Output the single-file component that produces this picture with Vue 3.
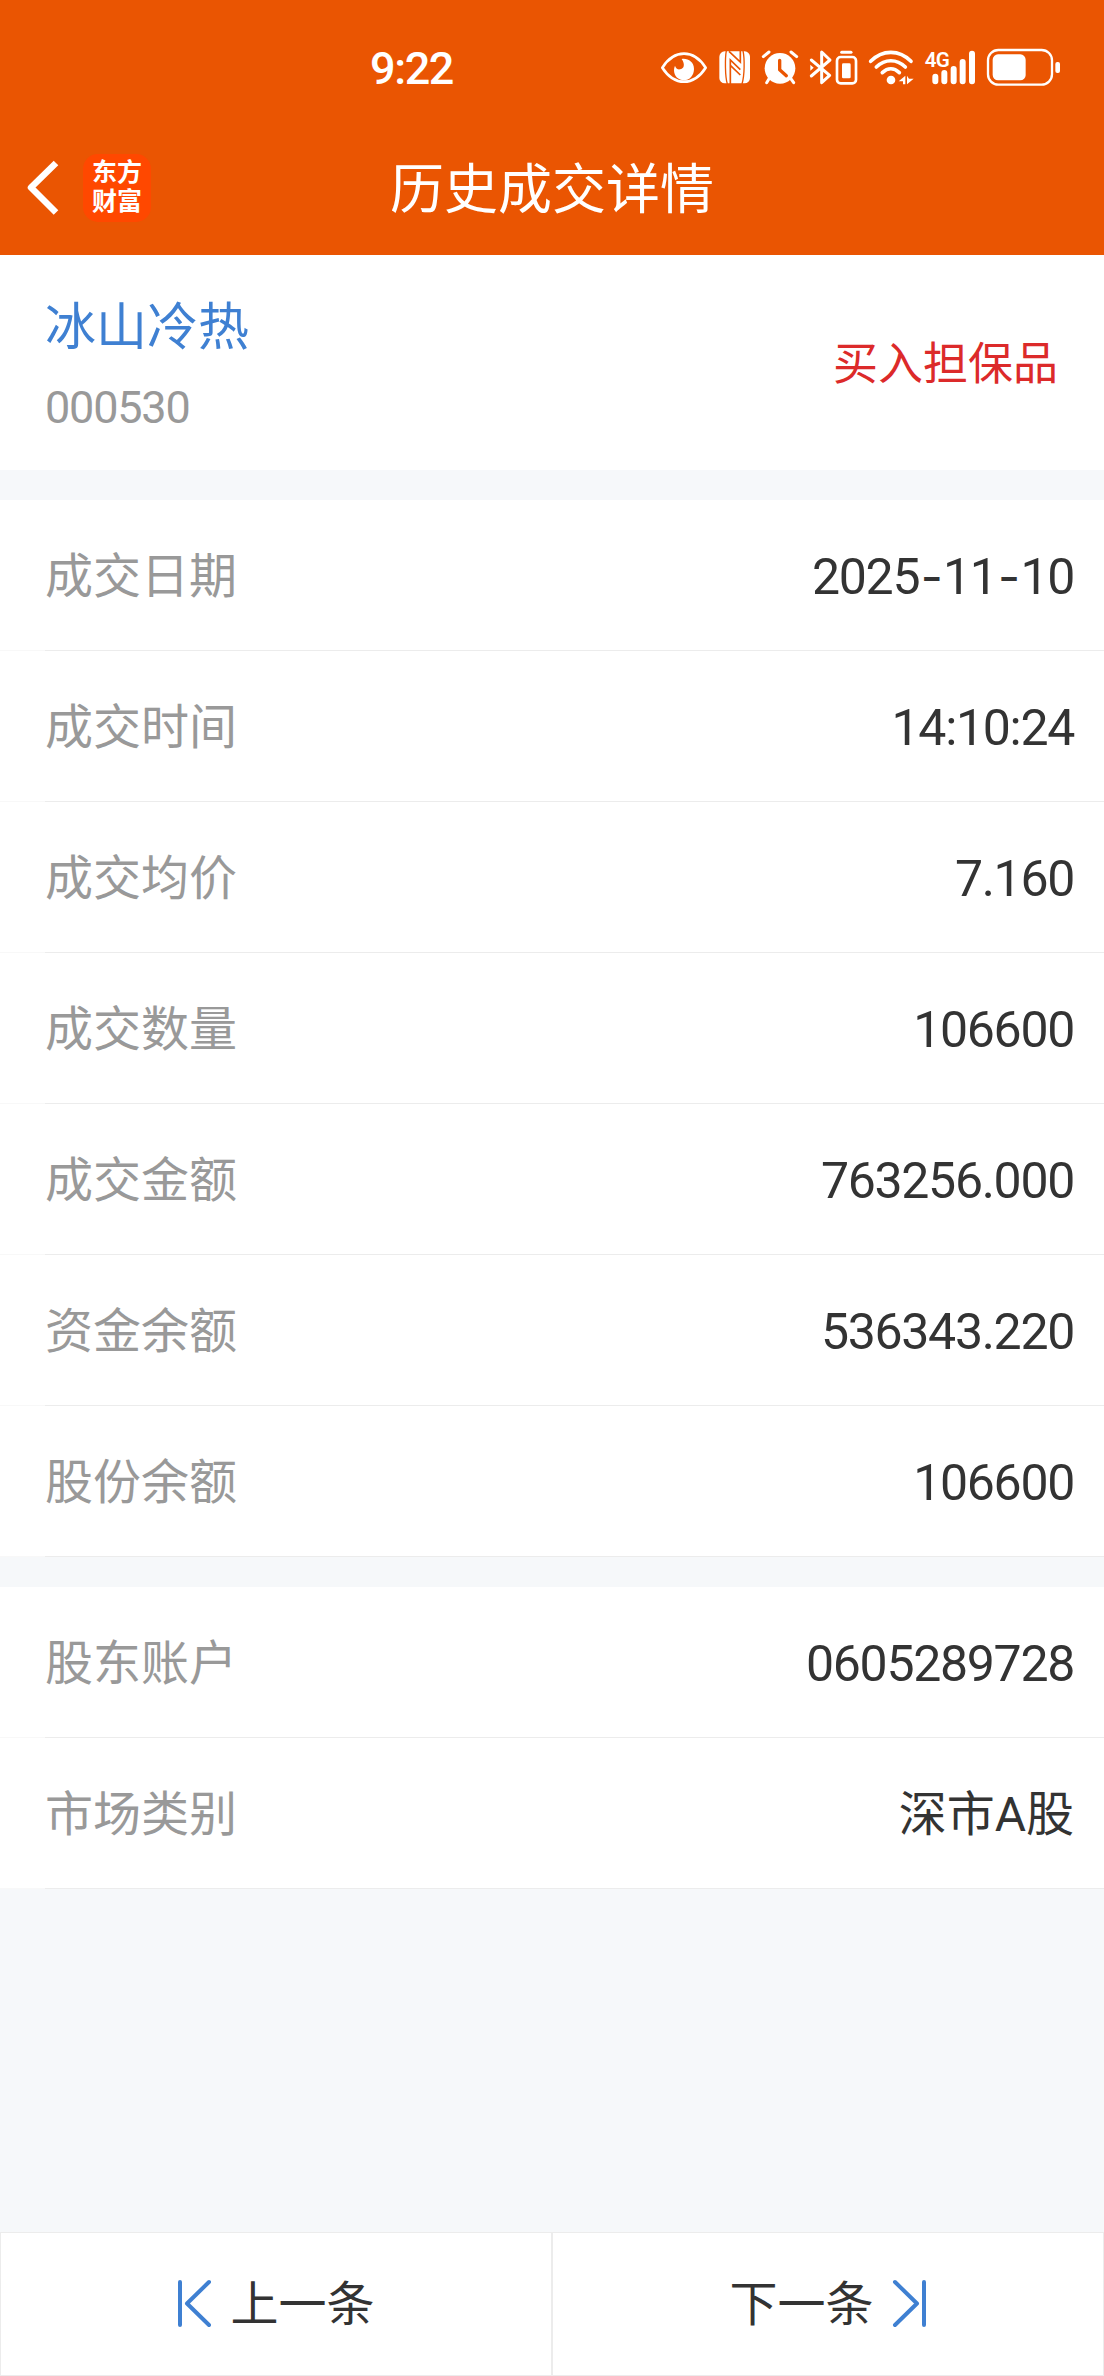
<script setup>
const stock = { name: '冰山冷热', code: '000530', action: '买入担保品' };

const groups = [
  [
    { label: '成交日期', value: '2025-11-10' },
    { label: '成交时间', value: '14:10:24' },
    { label: '成交均价', value: '7.160' },
    { label: '成交数量', value: '106600' },
    { label: '成交金额', value: '763256.000' },
    { label: '资金余额', value: '536343.220' },
    { label: '股份余额', value: '106600' },
  ],
  [
    { label: '股东账户', value: '0605289728' },
    { label: '市场类别', value: '深市A股', text: true },
  ],
];

// dashes get their own span so they can be spaced apart from the digits
const splitValue = (value) => value.split(/(-)/);
</script>

<template>
  <div class="page">
    <header class="header">
      <div class="status-bar">
        <span class="clock">9:22</span>
        <div class="status-icons">
          <svg width="48" height="40" viewBox="60 54 144 120">
            <path d="M67 113C85 85 106 71 132 71s47 14 65 42c-18 28-39 42-65 42s-47-14-65-42z" fill="none" stroke="#fff" stroke-width="8" stroke-linejoin="round" />
            <path d="M125 87c18-3 37 8 37 30 0 19-13 34-30 34s-30-13-30-30c0-5 1-10 3-14 2 8 8 12 15 11 11-1 17-14 5-31z" fill="#fff" />
          </svg>
          <svg width="35" height="40" viewBox="231 54 105 120">
            <rect x="238" y="64" width="92" height="96" rx="16" fill="#fff" />
            <path d="M259 62c-4 22-4 78 3 100M309 62c5 24 5 74-3 100" fill="none" stroke="#ea5502" stroke-width="4" />
            <path d="M271 162V90l30 29M267 64l34 32V62M271 106l30 29" fill="none" stroke="#ea5502" stroke-width="5" />
          </svg>
          <svg width="38" height="40" viewBox="363 54 114 120">
            <circle cx="420" cy="115" r="46" fill="#fff" />
            <path d="M370 80l17-14M453 66l17 14M388 145l-8 13M452 145l9 13" stroke="#fff" stroke-width="9" stroke-linecap="round" />
            <path d="M419 91v28l20 18" fill="none" stroke="#ea5502" stroke-width="10" stroke-linecap="round" stroke-linejoin="round" />
          </svg>
          <svg width="51" height="40" viewBox="504 54 153 120">
            <path d="M514 90l55 46-24 22V66l25 24-56 48" fill="none" stroke="#fff" stroke-width="9" stroke-linejoin="round" stroke-linecap="round" />
            <path d="M511 104l10 9-10 9z" fill="#fff" />
            <path d="M605 67h28" stroke="#fff" stroke-width="9" stroke-linecap="round" />
            <rect x="591" y="81" width="57" height="79" rx="11" fill="none" stroke="#fff" stroke-width="8" />
            <rect x="606" y="100" width="26" height="45" rx="4" fill="#fff" />
          </svg>
          <svg width="47" height="40" viewBox="24 54 141 120">
            <g fill="none" stroke="#fff" stroke-width="11" stroke-linecap="round">
              <path d="M32 94c35-36 86-36 121 0" />
              <path d="M49 111c26-25 61-25 87 0" />
              <path d="M67 128c16-15 35-15 51 0" />
            </g>
            <circle cx="93" cy="150" r="13" fill="#fff" />
            <path d="M136 137v26h-7v-9h-13zM141 163v-26l6 9h14z" fill="#fff" />
          </svg>
          <svg width="53" height="40" viewBox="192 54 159 120">
            <text x="194" y="111" class="network">4G</text>
            <g stroke="#fff" stroke-width="18" stroke-linecap="round">
              <path d="M226 140v14M253 129v25M281 117v37M308 96v58M336 71v83" />
            </g>
          </svg>
          <svg width="75" height="40" viewBox="378 54 225 120">
            <rect x="384" y="60" width="192" height="104" rx="31" fill="none" stroke="#fff" stroke-width="7" />
            <rect x="398" y="73" width="99" height="78" rx="16" fill="#fff" />
            <rect x="586" y="96" width="14" height="33" rx="6" fill="#fff" />
          </svg>
        </div>
      </div>
      <nav class="nav-bar">
        <div class="nav-left">
          <svg class="back" width="36" height="60" viewBox="0 0 36 60">
            <path d="M31 5L6 29.500l25 25" fill="none" stroke="#fff" stroke-width="6.5" stroke-linejoin="round" />
          </svg>
          <div class="logo"><span>东方</span><span>财富</span></div>
        </div>
        <h1 class="title">历史成交详情</h1>
      </nav>
    </header>

    <section class="summary">
      <div>
        <div class="stock-name">{{ stock.name }}</div>
        <div class="stock-code">{{ stock.code }}</div>
      </div>
      <div class="action">{{ stock.action }}</div>
    </section>

    <section v-for="(rows, index) in groups" :key="index" class="group">
      <div v-for="row in rows" :key="row.label" class="row">
        <span class="label">{{ row.label }}</span>
        <span v-if="row.text" class="value-text">{{ row.value }}</span>
        <span v-else class="value"><span v-for="(part, i) in splitValue(row.value)" :key="i" :class="{ dash: part === '-' }">{{ part }}</span></span>
      </div>
    </section>

    <footer class="pager">
      <button class="pager-button">
        <svg width="35" height="52" viewBox="0 0 35 52">
          <path d="M3 4v43M32 4L10 25.500l22 21.500" fill="none" stroke="#3f80d2" stroke-width="4" stroke-linecap="round" stroke-linejoin="round" />
        </svg>
        <span class="pager-text">上一条</span>
      </button>
      <button class="pager-button">
        <span class="pager-text">下一条</span>
        <svg width="35" height="52" viewBox="0 0 35 52">
          <path d="M32 4v43M3 4l22 21.500L3 47" fill="none" stroke="#3f80d2" stroke-width="4" stroke-linecap="round" stroke-linejoin="round" />
        </svg>
      </button>
    </footer>
  </div>
</template>

<style>
body {
  margin: 0;
  background: #f6f8fa;
}
</style>

<style scoped>
.page {
  width: 1104px;
  height: 2376px;
  display: flex;
  flex-direction: column;
  background: #f6f8fa;
  font-family: Roboto, "Noto Sans CJK SC", sans-serif;
  color: #333;
}
.header {
  height: 255px;
  background: #ea5502;
  color: #fff;
}
.status-bar {
  height: 136px;
  box-sizing: border-box;
  padding: 0 43px 0 370px;
  display: flex;
  align-items: center;
  justify-content: space-between;
}
.clock {
  font-size: 45px;
  font-weight: 500;
  letter-spacing: -1.4px;
}
.status-icons {
  display: flex;
  gap: 9px;
}
.network {
  font-size: 62px;
  font-weight: 600;
  letter-spacing: -2px;
  fill: #fff;
}
.nav-bar {
  height: 104px;
  display: grid;
  grid-template-columns: 1fr auto 1fr;
  align-items: center;
}
.nav-left {
  display: flex;
  align-items: center;
  padding-left: 25px;
}
.logo {
  width: 68px;
  height: 68px;
  margin-left: 22px;
  box-sizing: border-box;
  padding-bottom: 2px;
  border-radius: 15px;
  background: #ff4800;
  display: flex;
  flex-direction: column;
  align-items: center;
  justify-content: center;
  font-size: 25px;
  line-height: 29px;
  font-weight: 700;
}
.title {
  margin: 0;
  padding-top: 6px;
  font-size: 54px;
  line-height: 80px;
  font-weight: 400;
}
.summary {
  height: 215px;
  box-sizing: border-box;
  padding: 4px 46px 0 45px;
  display: flex;
  align-items: center;
  justify-content: space-between;
  background: #fff;
}
.stock-name {
  padding-top: 6px;
  font-size: 51px;
  line-height: 80px;
  color: #3f80d2;
}
.stock-code {
  font-size: 45px;
  line-height: 80px;
  letter-spacing: -1.2px;
  color: #999;
}
.action {
  font-size: 45px;
  line-height: 66px;
  color: #dc2a2a;
}
.group {
  margin-top: 30px;
}
.row {
  height: 151px;
  box-sizing: border-box;
  padding: 2px 30px 0 45px;
  display: flex;
  align-items: center;
  justify-content: space-between;
  background: linear-gradient(to right, #f8f8f8 45px, #ececec 45px) bottom / 100% 1px no-repeat #fff;
  font-size: 48px;
  line-height: 72px;
}
.label {
  color: #999;
}
.value {
  font-size: 50px;
  letter-spacing: -1.3px;
}
.dash {
  margin: 0 1.5px;
  font-family: Inter, sans-serif;
  font-size: 48px;
}
.pager {
  height: 144px;
  margin-top: auto;
  display: grid;
  grid-template-columns: 1fr 1fr;
}
.pager-button {
  display: flex;
  align-items: center;
  justify-content: center;
  gap: 18px;
  padding: 0;
  border: 1px solid #ececec;
  background: #fff;
  font: inherit;
  font-size: 48px;
  color: #333;
}
.pager-text {
  padding-bottom: 8px;
}
</style>
